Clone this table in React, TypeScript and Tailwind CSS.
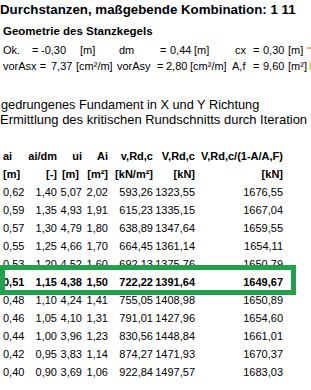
import React from 'react';

type Row = [string, string, string, string, string, string, string];

const rows: Row[] = [
  ['0,62', '1,40', '5,07', '2,02', '593,26', '1323,55', '1676,55'],
  ['0,59', '1,35', '4,93', '1,91', '615,23', '1335,15', '1667,04'],
  ['0,57', '1,30', '4,79', '1,80', '638,89', '1347,64', '1659,55'],
  ['0,55', '1,25', '4,66', '1,70', '664,45', '1361,14', '1654,11'],
  ['0,53', '1,20', '4,52', '1,60', '692,13', '1375,76', '1650,79'],
  ['0,51', '1,15', '4,38', '1,50', '722,22', '1391,64', '1649,67'],
  ['0,48', '1,10', '4,24', '1,41', '755,05', '1408,98', '1650,89'],
  ['0,46', '1,05', '4,10', '1,31', '791,01', '1427,96', '1654,60'],
  ['0,44', '1,00', '3,96', '1,23', '830,56', '1448,84', '1661,01'],
  ['0,42', '0,95', '3,83', '1,14', '874,27', '1471,93', '1670,37'],
  ['0,40', '0,90', '3,69', '1,06', '922,84', '1497,57', '1683,03'],
];

// column widths, first one left aligned, the rest right aligned
const widths = ['w-[20px]', 'w-[34px]', 'w-[25px]', 'w-[26px]', 'w-[45px]', 'w-[42px]', 'w-[88px]'];

function TableRow({ cells, bold, extra }: { cells: string[]; bold?: boolean; extra?: string[] }) {
  return (
    <div className={`flex h-[18px] leading-[18px] pl-[3px] whitespace-nowrap ${bold ? 'font-bold' : ''}`}>
      {cells.map((c, i) => (
        <div key={i} className={`${widths[i]} shrink-0 ${i === 0 ? 'text-left' : 'text-right'} ${extra?.[i] ?? ''}`}>
          {c}
        </div>
      ))}
    </div>
  );
}

// one line of the geometry block: [text, width class]
function Line({ parts, h }: { parts: [string, string][]; h: string }) {
  return (
    <div className={`flex pl-[3px] whitespace-nowrap ${h}`}>
      {parts.map(([t, w], i) => (
        <span key={i} className={`${w} shrink-0`}>
          {t}
        </span>
      ))}
    </div>
  );
}

export default function App() {
  return (
    <div
      className="relative w-[311px] h-[390px] overflow-hidden bg-white text-black text-[11px]"
      style={{ fontFamily: '"Liberation Sans", Arial, sans-serif' }}
    >
      <div className="h-[20px] leading-[20px] text-[13.3px] font-bold whitespace-nowrap">
        Durchstanzen, maßgebende Kombination: 1 11
      </div>
      <div className="h-[22px] leading-[23px] pl-[3px] text-[11.5px] font-bold">Geometrie des Stanzkegels</div>

      <Line
        h="h-[16px] leading-[17px]"
        parts={[
          ['Ok.', 'w-[29px]'],
          ['=', 'w-[9px]'],
          ['-0,30', 'w-[39px]'],
          ['[m]', 'w-[39px]'],
          ['dm', 'w-[41px]'],
          ['=', 'w-[10px]'],
          ['0,44', 'w-[24px]'],
          ['[m]', 'w-[41px]'],
          ['cx', 'w-[18px]'],
          ['=', 'w-[10px]'],
          ['0,30', 'w-[25px]'],
          ['[m]', ''],
        ]}
      />
      <Line
        h="h-[15px] leading-[16px]"
        parts={[
          ['vorAsx =', 'w-[48px]'],
          ['7,37', 'w-[25px]'],
          ['[cm²/m]', 'w-[41px]'],
          ['vorAsy', 'w-[40px]'],
          ['=', 'w-[9px]'],
          ['2,80', 'w-[24px]'],
          ['[cm²/m]', 'w-[42px]'],
          ['A,f', 'w-[21px]'],
          ['=', 'w-[10px]'],
          ['9,60', 'w-[25px]'],
          ['[m²]', ''],
        ]}
      />

      <div className="mt-[23px] whitespace-nowrap">
        <div className="h-[16px] leading-[17px] pl-[1px] text-[12.75px]">gedrungenes Fundament in X und Y Richtung</div>
        <div className="h-[15px] leading-[16px] text-[13px]">Ermittlung des kritischen Rundschnitts durch Iteration</div>
      </div>

      <div className="mt-[20px]">
        <div className="font-bold">
          <TableRow cells={['ai', 'ai/dm', 'ui', 'Ai', 'v,Rd,c', 'V,Rd,c', 'V,Rd,c/(1-A/A,F)']} />
          <TableRow
            cells={['[m]', '[-]', '[m]', '[m²]', '[kN/m²]', '[kN]', '[kN]']}
            extra={['', '', 'pr-[3px]', '', '', '', '']}
          />
        </div>
        {rows.map((r, i) => (
          <TableRow key={i} cells={r} bold={i === 5} />
        ))}
      </div>

      {/* highlight of the governing row */}
      <div className="absolute left-0 top-[265px] w-[296px] h-[30px] border-[5px] border-[#22a04b]" />

      {/* cut-off marks at the right edge */}
      <div className="absolute left-[307px] top-[47px] w-[4px] h-[2px] bg-[#f3b24a]" />
      <div className="absolute left-[309px] top-[62px] w-[2px] h-[8px] bg-[#f7d36a]" />
    </div>
  );
}
